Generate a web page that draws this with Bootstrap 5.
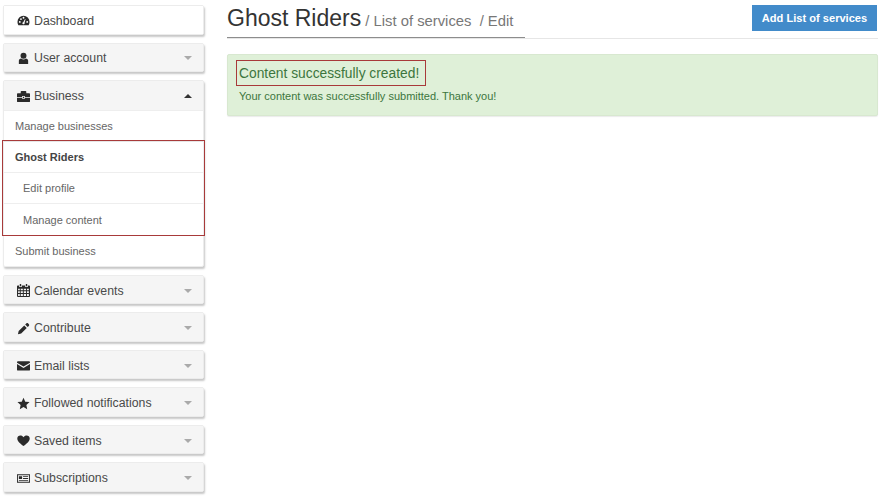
<!DOCTYPE html>
<html lang="en">
<head>
<meta charset="utf-8">
<title>Ghost Riders</title>
<link href="https://cdn.jsdelivr.net/npm/bootstrap@5.3.0/dist/css/bootstrap.min.css" rel="stylesheet">
<style>
html,body{height:500px;overflow:hidden}
body{font-family:"Liberation Sans",Arial,sans-serif;color:#333;background:#fff}
.page-wrap{padding:5px 3px 0 3px;gap:23px}
.side-col{width:201px;flex:none;gap:8px}
.side-panel{background:#fff;box-shadow:1px 2px 2px rgba(0,0,0,.22);border-radius:2px;border:1px solid #ececec}
.side-head{height:27.5px;background:#f5f5f5;font-size:12.3px;color:#4a4a4a;padding:2px 13px 0;gap:4px}
.side-head.is-plain{background:#fff}
.side-head.is-open{height:28.5px}
.side-ico{width:13px;height:13px;fill:#2b2b2b;flex:none}
.side-label{flex:1;white-space:nowrap}
.caret-down,.caret-up{width:0;height:0;border-left:4.5px solid transparent;border-right:4.5px solid transparent;flex:none;margin-right:-2px}
.caret-down{border-top:4.5px solid #aaa}
.caret-up{border-bottom:4.5px solid #333}
.side-item{height:31.3px;font-size:11px;color:#666;padding:1px 11px 0;border-top:1px solid #eee;display:flex;align-items:center;white-space:nowrap}
.side-item:first-child{border-top:1px solid #e6e6e6}
.side-item.is-sub{padding-left:19px}
.side-item.is-bold{font-weight:700;color:#444}
.mark-group{outline:1px solid #a83a3a;outline-offset:0;margin:0 -1px;padding:0 1px}
.main-col{flex:1;min-width:0}
.title-row{height:34px;border-bottom:1px solid #e6e6e6;padding-right:1px}
.title-block{height:34px;width:298px;border-bottom:1px solid #8d8d8d;white-space:nowrap;line-height:29px}
.title-main{font-size:23px;color:#333}
.title-sub{font-size:14.8px;color:#777}
.add-btn{height:26px;width:125px;background:#428bca;color:#fff;font-size:11.1px;font-weight:700;border-radius:0;border:0;padding:0;margin-bottom:7px}
.add-btn:hover{background:#428bca;color:#fff}
.ok-box{margin-top:15px;height:62px;background:#dff0d8;border-radius:2px;border:1px solid #d8e8d0;padding:5px 8px;box-shadow:0 1px 1px rgba(0,0,0,.08);color:#3c763d}
.ok-title{display:inline-block;border:1px solid #a83a3a;font-size:13.8px;line-height:25px;padding:0 6px 0 2px;height:26px;white-space:nowrap}
.ok-text{font-size:11px;padding-left:3px;margin-top:3px;line-height:14px}
</style>
</head>
<body>
<div class="page-wrap d-flex">
  <nav class="side-col d-flex flex-column">
    <div class="side-panel"><div class="side-head is-plain d-flex align-items-center">
      <svg class="side-ico" viewBox="0 0 14 14"><path d="M7 2a6.500 6.500 0 0 0-6.500 6.500c0 1.300.4 2.500 1 3.500h11c.6-1 1-2.200 1-3.500A6.500 6.500 0 0 0 7 2zM3 9.500a1 1 0 1 1 0-2 1 1 0 0 1 0 2zm1.300-3a1 1 0 1 1 0-2 1 1 0 0 1 0 2zM7 5a1 1 0 1 1 0-2 1 1 0 0 1 0 2zm1 5.500a1.200 1.200 0 0 1-2.200-.6c0-.5.4-1 .9-1.100l2-3.300.5.200-1 3.500c.2.500.1 1-.2 1.300zM11 9.500a1 1 0 1 1 0-2 1 1 0 0 1 0 2z"/></svg>
      <span class="side-label">Dashboard</span></div></div>
    <div class="side-panel"><div class="side-head d-flex align-items-center">
      <svg class="side-ico" viewBox="0 0 14 14"><circle cx="7" cy="4" r="3.200"/><path d="M2 13V9.500C2 8 3.200 7 4.500 7c.7.600 1.600 1 2.500 1s1.800-.4 2.500-1C10.800 7 12 8 12 9.500V13z"/></svg>
      <span class="side-label">User account</span><span class="caret-down"></span></div></div>
    <div class="side-panel">
      <div class="side-head is-open d-flex align-items-center">
        <svg class="side-ico" viewBox="0 0 14 14"><path d="M5 3V2h4v1zM4 3.500V1.800C4 1.300 4.300 1 4.800 1h4.400c.5 0 .8.300.8.800v1.700h3c.5 0 1 .4 1 1V7.500H8.500v-1h-3v1H0V4.500c0-.6.500-1 1-1zM0 8.300h5.500v1h3v-1H14V12c0 .6-.5 1-1 1H1c-.5 0-1-.4-1-1zM6.300 7.300h1.400v1.300H6.300z"/></svg>
        <span class="side-label">Business</span><span class="caret-up"></span></div>
      <div class="side-item">Manage businesses</div>
      <div class="mark-group">
        <div class="side-item is-bold">Ghost Riders</div>
        <div class="side-item is-sub">Edit profile</div>
        <div class="side-item is-sub">Manage content</div>
      </div>
      <div class="side-item">Submit business</div>
    </div>
    <div class="side-panel"><div class="side-head d-flex align-items-center">
      <svg class="side-ico" viewBox="0 0 14 14"><path fill-rule="evenodd" d="M3 0h1.500v2.500H3zM9.500 0H11v2.500H9.500zM1 1.500h1.300v1.700h2.900V1.500h3.600v1.700h2.900V1.500H13c.500 0 1 .4 1 1V13c0 .6-.5 1-1 1H1c-.5 0-1-.4-1-1V2.500c0-.6.500-1 1-1zM1.200 5v1.800H3V5zm2.800 0v1.800h2.300V5zm3.300 0v1.800h2.400V5zm3.400 0v1.800h2.100V5zM1.200 7.800v1.900H3V7.800zm2.800 0v1.900h2.300V7.800zm3.300 0v1.900h2.400V7.800zm3.400 0v1.900h2.100V7.800zM1.200 10.700v2.100H3v-2.100zm2.800 0v2.100h2.300v-2.100zm3.300 0v2.100h2.400v-2.100zm3.400 0v2.100h2.100v-2.100z"/></svg>
      <span class="side-label">Calendar events</span><span class="caret-down"></span></div></div>
    <div class="side-panel"><div class="side-head d-flex align-items-center">
      <svg class="side-ico" viewBox="0 0 14 14"><path d="M10 1.500c.6-.6 1.300-.6 1.800-.1l1 1c.5.500.5 1.200-.1 1.800l-1.200 1.200-2.700-2.700zM7.800 3.700l2.700 2.700L4.500 12.400 1 13.300l.8-3.600z"/></svg>
      <span class="side-label">Contribute</span><span class="caret-down"></span></div></div>
    <div class="side-panel"><div class="side-head d-flex align-items-center">
      <svg class="side-ico" viewBox="0 0 14 14"><path d="M1 2.500h12c.6 0 1 .4 1 1v.500L7 8.200 0 4v-.500c0-.6.400-1 1-1zM0 5.500l7 4.200 7-4.200V11.500c0 .6-.4 1-1 1H1c-.6 0-1-.4-1-1z"/></svg>
      <span class="side-label">Email lists</span><span class="caret-down"></span></div></div>
    <div class="side-panel"><div class="side-head d-flex align-items-center">
      <svg class="side-ico" viewBox="0 0 14 14"><path d="M7 .8l1.900 4.200 4.600.5-3.400 3.100.9 4.600L7 10.900l-4 2.300.9-4.600L.5 5.500 5.100 5z"/></svg>
      <span class="side-label">Followed notifications</span><span class="caret-down"></span></div></div>
    <div class="side-panel"><div class="side-head d-flex align-items-center">
      <svg class="side-ico" viewBox="0 0 14 14"><path d="M7 13C3.500 10.200 .3 7.800.3 4.800.3 2.800 1.800 1.500 3.600 1.500c1.400 0 2.600.7 3.400 2 .8-1.300 2-2 3.400-2 1.800 0 3.300 1.300 3.300 3.300 0 3-3.200 5.400-6.700 8.200z"/></svg>
      <span class="side-label">Saved items</span><span class="caret-down"></span></div></div>
    <div class="side-panel"><div class="side-head d-flex align-items-center">
      <svg class="side-ico" viewBox="0 0 14 14"><path fill-rule="evenodd" d="M0 2.500h14v9H0zM1 3.500v7h12v-7zM2 4.500h3.500v3H2zM6.500 4.500h5.500v1H6.500zM6.500 6.500h5.500v1H6.500zM2 8.500h10v1H2z"/></svg>
      <span class="side-label">Subscriptions</span><span class="caret-down"></span></div></div>
  </nav>
  <main class="main-col">
    <div class="title-row d-flex justify-content-between align-items-end">
      <div class="title-block"><span class="title-main">Ghost Riders</span><span class="title-sub"> / List of services &nbsp;/ Edit</span></div>
      <button class="btn add-btn" type="button">Add List of services</button>
    </div>
    <div class="ok-box">
      <div class="ok-title">Content successfully created!</div>
      <div class="ok-text">Your content was successfully submitted. Thank you!</div>
    </div>
  </main>
</div>
</body>
</html>
